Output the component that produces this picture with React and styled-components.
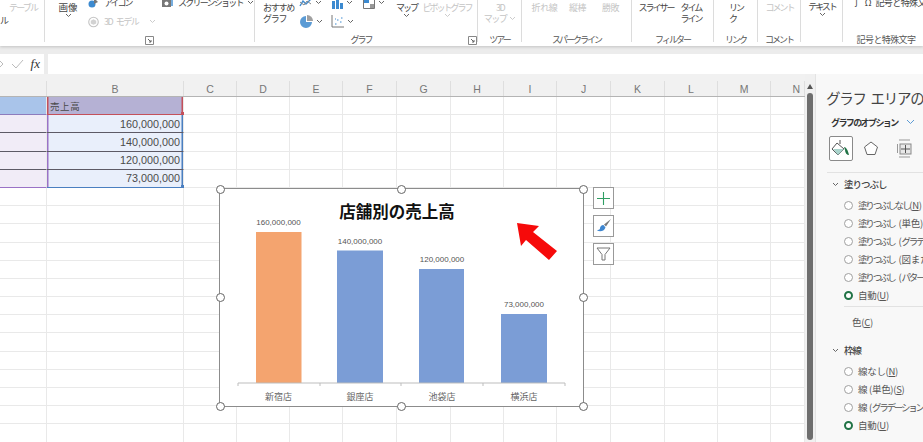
import React from "react";
import styled, { createGlobalStyle } from "styled-components";

const JP = `"Noto Sans CJK JP", "Noto Sans", sans-serif`;

const Global = createGlobalStyle`
  html, body { margin: 0; padding: 0; background: #fff; overflow: hidden; }
  #root { width: 923px; height: 442px; overflow: hidden; }
  * { box-sizing: border-box; }
  svg { flex: none; }
`;

const Page = styled.div`
  width: 923px; height: 442px; display: flex; flex-direction: column;
  font-family: ${JP}; color: #444; background: #ececec; overflow: hidden;
`;

/* ---------- Ribbon ---------- */
const Ribbon = styled.div`
  height: 46px; flex: none; display: flex; background: #fff; overflow: hidden;
  box-shadow: 0 1px 3px rgba(0,0,0,.18); position: relative; z-index: 1;
`;
const Group = styled.div`
  width: ${p => p.$w}px; height: 42px; flex: none; display: flex; flex-direction: column;
  border-right: ${p => (p.$last ? "0" : "1px solid #dcdcdc")}; position: relative;
`;
const Body = styled.div`
  height: 34px; flex: none; display: flex; align-items: flex-start;
  padding-left: ${p => p.$pl || 0}px; gap: ${p => p.$gap || 0}px;
`;
const GroupLabel = styled.div`
  height: 12px; flex: none; line-height: 12px; font-size: 9px; letter-spacing: ${p => p.$ls ?? -2}px;
  padding-left: ${p => p.$pl || 0}px; padding-right: ${p => p.$pr || 0}px;
  display: flex; justify-content: center; align-items: center; color: #555; white-space: nowrap;
`;
const Launcher = styled.span`
  position: absolute; right: 0; bottom: -3px; width: 9px; height: 9px; display: flex;
`;
const Big = styled.div`
  width: ${p => p.$w}px; flex: none; margin-left: ${p => p.$ml || 0}px; padding-top: ${p => p.$pt ?? 2}px;
  display: flex; flex-direction: column; align-items: ${p => p.$align || "center"};
  font-size: ${p => p.$fs || 9}px; line-height: 11px; letter-spacing: ${p => p.$ls ?? -2}px;
  color: ${p => (p.$off ? "#c4c4c4" : "#444")}; white-space: nowrap;
`;
const Indent = styled.div`
  padding-left: ${p => p.$l || 0}px; padding-top: ${p => p.$t || 0}px; color: ${p => p.$c || "inherit"};
`;
const Spacer = styled.div`
  width: ${p => p.$w}px; flex: none;
`;
const InlineChev = styled.span`
  display: inline-flex; align-items: center; gap: 3px;
`;
const ToolColumn = styled.div`
  display: flex; flex-direction: column; margin-top: -7px; width: ${p => p.$w}px; flex: none;
`;
const ToolRow = styled.div`
  height: 19px; display: flex; align-items: center; gap: ${p => p.$gap ?? 5}px; font-size: 9px; word-spacing: 3px;
  letter-spacing: ${p => p.$ls ?? -2}px; color: ${p => (p.$off ? "#c4c4c4" : "#444")}; white-space: nowrap;
`;
const IconGrid = styled.div`
  display: grid; grid-template-columns: 32px 32px 32px; grid-auto-rows: 19px; margin-top: -7px; flex: none;
`;
const IconCell = styled.div`
  display: flex; align-items: center; gap: 3px;
`;

const Chev = ({ c = "#666" }) => (
  <svg width="7" height="5" viewBox="0 0 7 5"><path d="M1 1l2.5 2.5L6 1" fill="none" stroke={c} strokeWidth="1" /></svg>
);
const LaunchIcon = () => (
  <svg width="9" height="9" viewBox="0 0 9 9"><path d="M.5.5h8v8h-8z" fill="none" stroke="#888" /><path d="M3 3l3 3M6 4v2H4" fill="none" stroke="#666" /></svg>
);

/* ---------- Formula bar ---------- */
const FormulaBar = styled.div`
  height: 20px; flex: none; margin-top: 8px; display: flex; gap: 4px;
`;
const NameTools = styled.div`
  width: 44px; background: #fff; display: flex; align-items: center; justify-content: space-between; padding-right: 4px; overflow: hidden;
`;
const Fx = styled.span`
  font-family: "Liberation Serif", serif; font-style: italic; font-weight: 400; font-size: 13px; color: #333;
`;
const FormulaInput = styled.div`
  flex: 1; background: #fff;
`;

/* ---------- Workspace ---------- */
const Workspace = styled.div`
  flex: 1; display: flex; min-height: 0;
`;
const Sheet = styled.div`
  width: 805px; flex: none; position: relative; overflow: hidden; background: #fff;
`;
const HeaderRow = styled.div`
  height: 23px; padding-top: 7px; display: flex; background: #f1f1f1; border-bottom: 1px solid #b4b4b4;
`;
const ColHead = styled.div`
  width: ${p => p.$w}px; flex: none; display: flex; align-items: center;
  justify-content: ${p => (p.$end ? "flex-end" : "center")}; padding-right: ${p => (p.$end ? 4 : 0)}px;
  font: 10.5px "Liberation Sans", sans-serif; color: #777; border-right: 1px solid #dedede;
`;
const Row = styled.div`
  height: 18.2px; display: flex;
`;
const tones = { aHead: "#a9c4ea", bHead: "#b5b1d4", a: "#f1ecf7", b: "#e9effb" };
const Cell = styled.div`
  width: ${p => p.$w}px; flex: none; height: 100%; position: relative;
  border-right: 1px solid #e9e9e9; border-bottom: 1px solid ${p => p.$line || "#e9e9e9"};
  background: ${p => tones[p.$tone] || "#fff"}; box-shadow: ${p => p.$edge || "none"};
  font: ${p => (p.$tone === "bHead" ? `9.5px ${JP}` : `10.8px "Liberation Sans", sans-serif`)};
  color: #4a4a4a; display: flex; align-items: center;
  justify-content: ${p => (p.$tone === "b" ? "flex-end" : "flex-start")};
  padding: 0 3px; letter-spacing: ${p => (p.$tone === "bHead" ? ".6px" : "0")};
`;
const Corner = styled.span`
  position: absolute; right: -2px; bottom: -2px; width: 4px; height: 4px; background: ${p => p.$c};
`;

/* ---------- Chart ---------- */
const ChartFrame = styled.div`
  position: absolute; left: 219px; top: 114px; width: 365px; height: 219px;
  background: #fff; border: 1.5px solid #8c8c8c;
`;
const ChartSvg = styled.svg`
  position: absolute; left: -1.5px; top: -1.5px; width: 365px; height: 219px;
`;
const Handle = styled.span`
  position: absolute; width: 9px; height: 9px; border-radius: 50%; background: #fff; border: 1.5px solid #666;
  left: calc(${p => p.$x}% - 4.5px); top: calc(${p => p.$y}% - 4.5px);
`;
const SideButtons = styled.div`
  position: absolute; left: 593px; top: 113px; display: flex; flex-direction: column; gap: 6px;
`;
const SideButton = styled.div`
  width: 21px; height: 22px; background: #fff; border: 1px solid #999; display: flex; align-items: center; justify-content: center;
`;

/* ---------- Scrollbar ---------- */
const ScrollBar = styled.div`
  width: 10px; flex: none; background: #f0f0f0; display: flex; flex-direction: column; align-items: center; padding-top: 10px;
`;
const ScrollArrow = styled.div`
  width: 0; height: 0; border-left: 3.5px solid transparent; border-right: 3.5px solid transparent; border-bottom: 5px solid #555;
`;
const ScrollThumb = styled.div`
  width: 6px; flex: 1; margin-top: 4px; margin-bottom: 2px; background: #6e6e6e; border-radius: 3px;
`;

/* ---------- Pane ---------- */
const Pane = styled.div`
  flex: 1; min-width: 0; background: #f8f8f8; overflow: hidden; padding: 0 0 0 11px;
  border-left: 1px solid #e3e3e3;
`;
const PaneTitle = styled.div`
  height: 23px; margin-top: 12px; margin-left: -1px; font-size: 14.5px; line-height: 23px; letter-spacing: -1.3px; word-spacing: 3px; color: #444; white-space: nowrap;
`;
const OptionTabs = styled.div`
  margin: 6px 0 0 4px; height: 14px; display: flex; align-items: center; gap: 8px; font-size: 9px; font-weight: 700;
  letter-spacing: -1.6px; color: #333; white-space: nowrap;
`;
const IconTabs = styled.div`
  margin: 7px 0 0 2px; display: flex; align-items: center; gap: 9px; height: 25px;
`;
const IconTab = styled.div`
  width: ${p => p.$w || 24}px; height: 25px; margin-left: ${p => p.$ml || 0}px; flex: none; display: flex; align-items: center; justify-content: center;
  border: ${p => (p.$on ? "1px solid #8a8a8a" : "0")}; border-radius: 2px; background: ${p => (p.$on ? "#fff" : "transparent")};
`;
const Divider = styled.div`
  height: 1px; background: #e2e2e2; margin: ${p => p.$m || "11px 0 0 0"};
`;
const SectionHead = styled.div`
  margin: ${p => p.$m || "4px 0 0 5px"}; height: 14px; display: flex; align-items: center; gap: 5px;
  font-size: 9.5px; font-weight: 500; letter-spacing: -1px; color: #444; white-space: nowrap;
`;
const RadioList = styled.div`
  margin: ${p => p.$m || "5px 0 0 17px"}; display: flex; flex-direction: column;
`;
const RadioRow = styled.div`
  height: 18px; display: flex; align-items: center; gap: 5px; font-size: 9.5px;
  letter-spacing: -2.2px; color: #555; white-space: nowrap;
`;
const RadioText = styled.span`
  display: inline-block;
`;
const Plain = styled.span`
  letter-spacing: -.3px; margin-left: ${p => p.$ml || 0}px;
`;
const Radio = styled.span`
  width: 9px; height: 9px; flex: none; border-radius: 50%; background: #fff;
  border: ${p => (p.$on ? "2.5px solid #217346" : "1px solid #a0a0a0")};
`;
const Acc = styled.span`
  text-decoration: underline;
`;
const ColorLabel = styled.div`
  margin: 8px 0 0 25px; height: 14px; line-height: 14px; font-size: 9.5px; color: #555; letter-spacing: -.3px;
`;

const cols = [47, 137, 53, 53, 53, 54, 54, 53, 53, 54, 54, 53, 53, 34];
const letters = ["", "B", "C", "D", "E", "F", "G", "H", "I", "J", "K", "L", "M", "N"];
const values = ["160,000,000", "140,000,000", "120,000,000", "73,000,000"];

const bars = [
  { x: 256, w: 45.5, y: 232, c: "#f4a46f", v: "160,000,000", n: "新宿店", cx: 278.5 },
  { x: 337, w: 46, y: 250.5, c: "#7b9dd6", v: "140,000,000", n: "銀座店", cx: 360 },
  { x: 419, w: 45, y: 269, c: "#7b9dd6", v: "120,000,000", n: "池袋店", cx: 442 },
  { x: 501, w: 46, y: 314, c: "#7b9dd6", v: "73,000,000", n: "横浜店", cx: 524 },
];

const handles = [[0, 0], [50, 0], [100, 0], [0, 50], [100, 50], [0, 100], [50, 100], [100, 100]];

const Mini = {
  Icon: () => (<svg width="11" height="11" viewBox="0 0 11 11"><circle cx="4" cy="7" r="3.5" fill="#3c8ad0" /><path d="M6 1l4 4-4 2z" fill="#777" /></svg>),
  Shot: () => (<svg width="12" height="10" viewBox="0 0 12 10"><rect x="0" y="2" width="9" height="7" fill="#777" /><circle cx="4.5" cy="5.5" r="2" fill="#fff" /><path d="M10 1v7" stroke="#3c8ad0" strokeWidth="1.4" /></svg>),
  Cube: () => (<svg width="11" height="12" viewBox="0 0 12 12"><circle cx="6" cy="6" r="5.2" fill="none" stroke="#c4c4c4" strokeWidth="1.2" /><path d="M6 3l3 1.5v3L6 9 3 7.5v-3z" fill="#d2d2d2" /></svg>),
  Line: () => (<svg width="13" height="10" viewBox="0 0 13 10"><path d="M1 8l3-5 3 3 5-5" fill="none" stroke="#3c8ad0" strokeWidth="1.4" /><path d="M1 4l4 3 3-4 4 3" fill="none" stroke="#888" /></svg>),
  Bars: () => (<svg width="12" height="12" viewBox="0 0 12 12"><path d="M1 4h3v8H1zM5 1h3v11H5zM9 6h3v6H9z" fill="#3c8ad0" /></svg>),
  Hier: () => (<svg width="12" height="12" viewBox="0 0 12 12"><path d="M.5.5h11v11H.5z" fill="#fff" stroke="#777" /><path d="M1 1h5v5H1z" fill="#3c8ad0" /><path d="M7 7h4v4H7z" fill="#999" /></svg>),
  Pie: () => (<svg width="14" height="14" viewBox="0 0 14 14"><path d="M7 1a6 6 0 1 0 6 6H7z" fill="#5b9bd5" /><path d="M8 0a6 6 0 0 1 6 6H8z" fill="#a0a0a0" /></svg>),
  Scatter: () => (<svg width="13" height="13" viewBox="0 0 13 13"><path d="M1 0v12h12" fill="none" stroke="#777" /><path d="M4 9h1.5M6 5h1.5M9 7h1.5M10 3h1.5M4 4h1" stroke="#3c8ad0" /></svg>),
};

export default function App() {
  return (
    <Page>
      <Global />
      <Ribbon>
        <Group $w={45}>
          <Body>
            <Big $w={45} $align="flex-start" $off $ls={-1.8}>
              <Indent $l={9}>テーブル</Indent>
              <Indent $t={2} $c="#444">ル</Indent>
            </Big>
          </Body>
        </Group>
        <Group $w={210}>
          <Body $pl={13}>
            <Big $w={20} $fs={9.5} $ls={0}>画像<Chev /></Big>
            <Spacer $w={10} />
            <ToolColumn $w={74}>
              <ToolRow><Mini.Icon />アイコン</ToolRow>
              <ToolRow $off $ls={-1.5}><Mini.Cube />3D モデル<Spacer $w={1} /><Chev c="#ccc" /></ToolRow>
            </ToolColumn>
            <ToolColumn $w={92}>
              <ToolRow $gap={4} $ls={-1.75}><Mini.Shot />スクリーンショット<Chev /></ToolRow>
            </ToolColumn>
          </Body>
          <GroupLabel><LaunchIcon /></GroupLabel>
        </Group>
        <Group $w={223}>
          <Body $pl={7} $gap={4}>
            <Big $w={33} $ls={-1.3}>おすすめ<br />グラフ</Big>
            <IconGrid>
              <IconCell><Mini.Line /><Chev /></IconCell>
              <IconCell><Mini.Bars /><Chev /></IconCell>
              <IconCell><Mini.Hier /><Chev /></IconCell>
              <IconCell><Mini.Pie /><Chev /></IconCell>
              <IconCell><Mini.Scatter /><Chev /></IconCell>
            </IconGrid>
            <Big $w={21} $ml={-3}>マップ<Chev /></Big>
            <Big $w={50} $ml={1} $off>ピボットグラフ<Chev c="#ccc" /></Big>
          </Body>
          <GroupLabel $pr={10}>グラフ</GroupLabel>
          <Launcher><LaunchIcon /></Launcher>
        </Group>
        <Group $w={44}>
          <Body><Big $w={44} $off $ls={-1.5}>3D<InlineChev>マップ<Chev c="#ccc" /></InlineChev></Big></Body>
          <GroupLabel>ツアー</GroupLabel>
        </Group>
        <Group $w={110}>
          <Body $pl={9} $gap={6}>
            <Big $w={27} $off $ls={-.4}>折れ線</Big>
            <Big $w={27} $off $ls={-.4}>縦棒</Big>
            <Big $w={27} $off $ls={-.4}>勝敗</Big>
          </Body>
          <GroupLabel>スパークライン</GroupLabel>
        </Group>
        <Group $w={82}>
          <Body $pl={7} $gap={6}>
            <Big $w={34}>スライサー</Big>
            <Big $w={24}>タイム<br />ライン</Big>
          </Body>
          <GroupLabel>フィルター</GroupLabel>
        </Group>
        <Group $w={44}>
          <Body><Big $w={44}>リン<br />ク</Big></Body>
          <GroupLabel>リンク</GroupLabel>
        </Group>
        <Group $w={43}>
          <Body><Big $w={43} $off>コメント</Big></Body>
          <GroupLabel>コメント</GroupLabel>
        </Group>
        <Group $w={42}>
          <Body><Big $w={42} $pt={1}>テキスト<Chev /></Big></Body>
        </Group>
        <Group $w={80} $last>
          <Body $pl={9}>
            <ToolColumn $w={110}><ToolRow $gap={3} $ls={-.6}>∫ Ω 記号と特殊文字</ToolRow></ToolColumn>
          </Body>
          <GroupLabel $ls={-.6} $pl={6}>記号と特殊文字</GroupLabel>
        </Group>
      </Ribbon>

      <FormulaBar>
        <NameTools>
          <svg width="4" height="10" viewBox="0 0 4 10"><path d="M0 2l3 3-3 3" fill="none" stroke="#bbb" /></svg>
          <svg width="13" height="10" viewBox="0 0 13 10"><path d="M1 5l4 4 7-8" fill="none" stroke="#bbb" /></svg>
          <Fx>fx</Fx>
        </NameTools>
        <FormulaInput />
      </FormulaBar>

      <Workspace>
        <Sheet>
          <HeaderRow>
            {cols.map((w, i) => (<ColHead key={i} $w={w} $end={letters[i] === "N"}>{letters[i]}</ColHead>))}
          </HeaderRow>
          <Row>
            {cols.map((w, i) => (
              i === 0 ? <Cell key={i} $w={w} $tone="aHead" $line="#8d7cbd" /> :
              i === 1 ? <Cell key={i} $w={w} $tone="bHead" $line="#c4505a" $edge="inset 1.5px 0 #c4505a, inset -1.5px 0 #c4505a">売上高<Corner $c="#c4505a" /></Cell> :
              <Cell key={i} $w={w} />
            ))}
          </Row>
          {Array.from({ length: 18 }).map((_, r) => {
            const v = values[r];
            const last = r === 3;
            return (
              <Row key={r}>
                {cols.map((w, i) => {
                  if (v && i === 0) return <Cell key={i} $w={w} $tone="a" $line={last ? "#9a72c6" : "#5d5a66"} />;
                  if (v && i === 1) return (
                    <Cell key={i} $w={w} $tone="b" $line={last ? "#4a7fc0" : "#5d5a66"} $edge="inset 1.5px 0 #9a72c6, inset -1.5px 0 #4a7fc0">
                      {v}{last && <Corner $c="#4a7fc0" />}
                    </Cell>
                  );
                  return <Cell key={i} $w={w} />;
                })}
              </Row>
            );
          })}

          <ChartFrame>
            <ChartSvg viewBox="219 188 365 219">
              <text x="397" y="218" textAnchor="middle" fontFamily={JP} fontWeight="700" fontSize="16.5" fill="#111">店舗別の売上高</text>
              {bars.map(b => (
                <g key={b.n}>
                  <rect x={b.x} y={b.y} width={b.w} height={383 - b.y} fill={b.c} />
                  <text x={b.cx} y={b.y - 7} textAnchor="middle" fontFamily="Liberation Sans, sans-serif" fontSize="8" fill="#555">{b.v}</text>
                  <text x={b.cx} y="400" textAnchor="middle" fontFamily={JP} fontSize="9" fill="#666">{b.n}</text>
                </g>
              ))}
              <path d="M238 383h327M238 383v3M320 383v3M401 383v3M483 383v3M565 383v3" fill="none" stroke="#bdbdbd" />
              <path d="M517 223L539 226L533 232L557 251L549 260L526 240L521 246Z" fill="#f60a0a" />
            </ChartSvg>
            {handles.map(([x, y]) => <Handle key={`${x}-${y}`} $x={x} $y={y} />)}
          </ChartFrame>

          <SideButtons>
            <SideButton>
              <svg width="15" height="15" viewBox="0 0 15 15"><path d="M7.5 1v13M1 7.5h13" stroke="#2f9e63" strokeWidth="1.1" /></svg>
            </SideButton>
            <SideButton>
              <svg width="16" height="16" viewBox="0 0 16 16"><path d="M15 1L8 6.5l2 2z" fill="#7a7a7a" /><path d="M7.5 7C5 7 4 9 4 10.5 4 11.5 2 12 1 12.5c3 1.5 7 1 8.5-3z" fill="#3f86cf" /></svg>
            </SideButton>
            <SideButton>
              <svg width="15" height="16" viewBox="0 0 15 16"><path d="M1 2h13L9 8.5V14L6 14V8.5z" fill="#fff" stroke="#777" /></svg>
            </SideButton>
          </SideButtons>
        </Sheet>

        <ScrollBar>
          <ScrollArrow />
          <ScrollThumb />
        </ScrollBar>

        <Pane>
          <PaneTitle>グラフ エリアの書式設定</PaneTitle>
          <OptionTabs>
            グラフのオプション
            <svg width="9" height="6" viewBox="0 0 9 6"><path d="M1 1l3.5 3.5L8 1" fill="none" stroke="#5b9bd5" /></svg>
          </OptionTabs>
          <IconTabs>
            <IconTab $on>
              <svg width="20" height="20" viewBox="0 0 20 20">
                <path d="M9 1v4M6 4l7 6-6 6-6-6z" fill="#fff" stroke="#555" />
                <path d="M2 10h11l-6 6z" fill="#a9d4cc" />
                <path d="M13 8c2 0 4 3 5 8-2 0-4-2-4-5z" fill="#217346" />
              </svg>
            </IconTab>
            <IconTab $w={18}>
              <svg width="16" height="17" viewBox="0 0 16 17"><path d="M8 2l6.5 5-2.5 7.500H4L1.5 7z" fill="#fff" stroke="#666" /></svg>
            </IconTab>
            <IconTab $w={18} $ml={6}>
              <svg width="17" height="19" viewBox="0 0 17 19">
                <path d="M3 1h11M3 18h11M1.5 5v9" stroke="#999" fill="none" />
                <rect x="4" y="5" width="11" height="10" fill="#e8e8e8" stroke="#888" />
                <path d="M9.5 6v8M5 10h9" stroke="#555" />
              </svg>
            </IconTab>
          </IconTabs>
          <Divider />
          <SectionHead>
            <Chev />塗りつぶし
          </SectionHead>
          <RadioList>
            <RadioRow><Radio /><RadioText>塗りつぶしなし<Plain>(<Acc>N</Acc>)</Plain></RadioText></RadioRow>
            <RadioRow><Radio /><RadioText>塗りつぶし<Plain $ml={4}>(単色)(S)</Plain></RadioText></RadioRow>
            <RadioRow><Radio /><RadioText>塗りつぶし<Plain $ml={4}>(</Plain>グラデーション)</RadioText></RadioRow>
            <RadioRow><Radio /><RadioText>塗りつぶし<Plain $ml={4}>(図または)</Plain></RadioText></RadioRow>
            <RadioRow><Radio /><RadioText>塗りつぶし<Plain $ml={4}>(</Plain>パターン)</RadioText></RadioRow>
            <RadioRow><Radio $on /><RadioText><Plain>自動(<Acc>U</Acc>)</Plain></RadioText></RadioRow>
          </RadioList>
          <Divider $m="2px 0 0 17px" />
          <ColorLabel>色(<Acc>C</Acc>)</ColorLabel>
          <SectionHead $m="14px 0 0 5px">
            <Chev />枠線
          </SectionHead>
          <RadioList $m="5px 0 0 17px">
            <RadioRow><Radio /><RadioText><Plain>線なし(<Acc>N</Acc>)</Plain></RadioText></RadioRow>
            <RadioRow><Radio /><RadioText><Plain>線 (単色)(<Acc>S</Acc>)</Plain></RadioText></RadioRow>
            <RadioRow><Radio /><RadioText><Plain>線 (</Plain>グラデーション<Plain>)</Plain></RadioText></RadioRow>
            <RadioRow><Radio $on /><RadioText><Plain>自動(<Acc>U</Acc>)</Plain></RadioText></RadioRow>
          </RadioList>
        </Pane>
      </Workspace>
    </Page>
  );
}
